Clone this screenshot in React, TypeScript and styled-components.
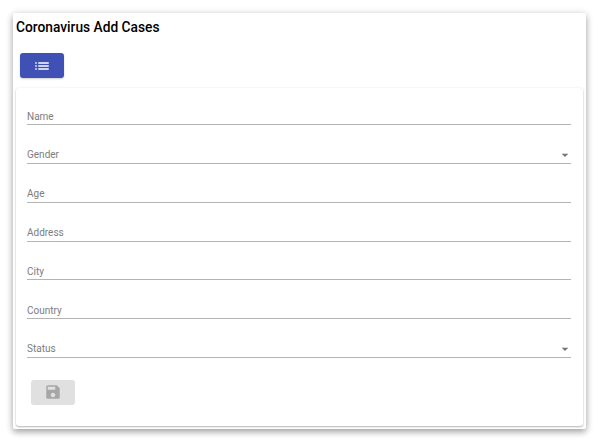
import React from 'react'
import styled, { createGlobalStyle } from 'styled-components'
import { MdList, MdSave, MdArrowDropDown } from 'react-icons/md'

const Global = createGlobalStyle`
  html, body {
    margin: 0;
    background: #fff;
    font-family: Roboto, "Liberation Sans", sans-serif;
  }
`

const Page = styled.div`
  width: 600px;
  height: 448px;
  box-sizing: border-box;
  padding: 13px 14px 0 13px;
  overflow: hidden;
`

const Card = styled.div`
  height: 416px;
  box-sizing: border-box;
  padding: 0 3px 3px;
  background: #fff;
  border-radius: 2px;
  box-shadow: 0 3px 6px rgba(0, 0, 0, 0.3), 0 1px 10px rgba(0, 0, 0, 0.12);
  display: flex;
  flex-direction: column;
`

const Title = styled.h4`
  margin: 0;
  padding-top: 6px;
  height: 34px;
  box-sizing: border-box;
  font-size: 13.75px;
  line-height: 17px;
  font-weight: 500;
  color: #000;
`

const ListButton = styled.button`
  margin: 6px 0 0 4px;
  width: 44px;
  height: 25px;
  flex: none;
  border: 0;
  border-radius: 3px;
  background: #3f51b5;
  color: #fff;
  display: flex;
  align-items: center;
  justify-content: center;
  padding: 0;
  box-shadow: 0 1px 2px rgba(0, 0, 0, 0.2);
`

const FormCard = styled.form`
  margin-top: 10px;
  flex: 1;
  border-radius: 3px;
  background: #fff;
  box-shadow: 0 1px 2px rgba(0, 0, 0, 0.28), 0 0 2px rgba(0, 0, 0, 0.08);
  padding: 10.4px 12px 0 11px;
  display: flex;
  flex-direction: column;
`

const Field = styled.div`
  height: 26.8px;
  margin-bottom: 12px;
  flex: none;
  box-sizing: border-box;
  border-bottom: 1px solid #b4b4b4;
  display: flex;
  align-items: flex-end;
  justify-content: space-between;
  position: relative;
`

const Label = styled.label`
  font-size: 10px;
  line-height: 12px;
  color: #7d7d7d;
  padding-bottom: 1.5px;
`

const Caret = styled(MdArrowDropDown)`
  color: #757575;
  position: absolute;
  right: -2px;
  bottom: 0;
`

const SaveButton = styled.button`
  margin: 9.6px 0 0 4px;
  width: 44px;
  height: 25px;
  border: 0;
  border-radius: 3px;
  background: #e0e0e0;
  color: #a6a6a6;
  display: flex;
  align-items: center;
  justify-content: center;
  padding: 0;
`

const fields = [
  { label: 'Name' },
  { label: 'Gender', select: true },
  { label: 'Age' },
  { label: 'Address' },
  { label: 'City' },
  { label: 'Country' },
  { label: 'Status', select: true },
]

export default function App() {
  return (
    <Page>
      <Global />
      <Card>
        <Title>Coronavirus Add Cases</Title>
        <ListButton type='button'>
          <MdList size={18} />
        </ListButton>
        <FormCard>
          {fields.map((f) => (
            <Field key={f.label}>
              <Label>{f.label}</Label>
              {f.select && <Caret size={16} />}
            </Field>
          ))}
          <SaveButton type='button' disabled>
            <MdSave size={18} />
          </SaveButton>
        </FormCard>
      </Card>
    </Page>
  )
}
